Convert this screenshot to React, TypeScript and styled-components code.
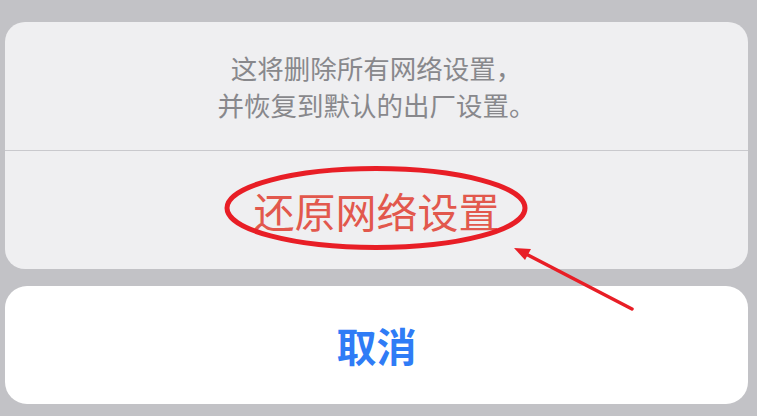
import React from 'react';
import styled, { createGlobalStyle } from 'styled-components';

const GlobalStyle = createGlobalStyle`
  html, body {
    margin: 0;
    padding: 0;
    background: #c2c2c6;
  }
  body {
    font-family: "Noto Sans CJK SC", "Noto Sans", sans-serif;
  }
`;

const Screen = styled.div`
  position: relative;
  width: 757px;
  height: 416px;
  box-sizing: border-box;
  padding: 22px 9px 0 5px;
  display: flex;
  flex-direction: column;
  gap: 17px;
  overflow: hidden;
`;

const Sheet = styled.div`
  background: #efeff1;
  border-radius: 20px;
  display: flex;
  flex-direction: column;
`;

const Message = styled.div`
  height: 129px;
  display: flex;
  flex-direction: column;
  align-items: center;
  justify-content: center;
  box-sizing: border-box;
  border-bottom: 1px solid #c9c9cd;
  color: #88888c;
  font-size: 26.5px;
  line-height: 37px;
  text-align: center;
`;

const Action = styled.div<{ $color: string; $bold?: boolean }>`
  height: 118px;
  display: flex;
  align-items: center;
  justify-content: center;
  color: ${(p) => p.$color};
  font-size: ${(p) => (p.$bold ? 40 : 41)}px;
  font-weight: ${(p) => (p.$bold ? 700 : 400)};
  line-height: 1;
`;

const Circled = styled.span`
  position: relative;
  display: inline-block;
  svg {
    position: absolute;
    left: 50%;
    top: 50%;
    width: 310px;
    height: 90px;
    transform: translate(-50%, -50%);
    overflow: visible;
  }
`;

const CancelCard = styled.div`
  background: #ffffff;
  border-radius: 22px;
`;

const ArrowLayer = styled.svg`
  position: absolute;
  left: 0;
  top: 0;
  width: 757px;
  height: 416px;
  pointer-events: none;
`;

export default function App() {
  return (
    <>
      <GlobalStyle />
      <Screen>
        <Sheet>
          <Message>
            <div>这将删除所有网络设置，</div>
            <div>并恢复到默认的出厂设置。</div>
          </Message>
          <Action $color="#e2584d">
            <Circled>
              还原网络设置
              <svg viewBox="0 0 310 90">
                <ellipse cx="154" cy="43" rx="149" ry="39.5" fill="none" stroke="#e81e26" strokeWidth="5" />
              </svg>
            </Circled>
          </Action>
        </Sheet>
        <CancelCard>
          <Action $color="#2f7cf6" $bold>取消</Action>
        </CancelCard>
        <ArrowLayer viewBox="0 0 757 416">
          <line x1="632" y1="309" x2="524" y2="253" stroke="#e81e26" strokeWidth="3.5" strokeLinecap="round" />
          <polygon points="514,248 531,249 525,260" fill="#e81e26" />
        </ArrowLayer>
      </Screen>
    </>
  );
}
